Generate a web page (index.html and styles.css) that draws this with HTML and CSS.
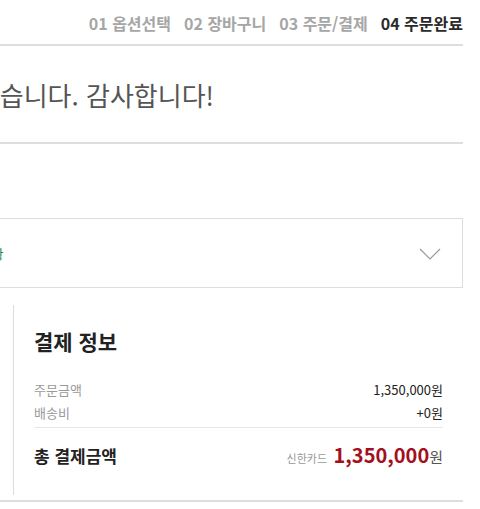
FILE: index.html
```html
<!DOCTYPE html>
<html lang="ko">
  <head>
    <meta charset="UTF-8" />
    <title>주문완료</title>
    <link rel="stylesheet" href="styles.css">
  </head>
  <body>
    <div class="page">
      <div class="wrap">
        <div class="steps">
          <span class="step">01 옵션선택</span>
          <span class="step">02 장바구니</span>
          <span class="step">03 주문/결제</span>
          <span class="step on">04 주문완료</span>
        </div>

        <div class="done">
          <h2>주문이 완료되었습니다. 감사합니다!</h2>
        </div>

        <div class="acc">
          <span class="acc-title">주문상품 및 배송 요청사항</span>
          <svg class="acc-arrow" width="22" height="12" viewBox="0 0 22 12">
            <polyline points="1,1 11,11 21,1" fill="none" stroke="#9a9a9a" stroke-width="1.2" />
          </svg>
        </div>

        <div class="pay-area">
          <div class="pay-left"></div>
          <div class="pay">
            <h3>결제 정보</h3>
            <div class="pay-rows">
              <div class="row">
                <span class="label">주문금액</span>
                <span class="val">1,350,000원</span>
              </div>
              <div class="row">
                <span class="label">배송비</span>
                <span class="val">+0원</span>
              </div>
            </div>
            <div class="total">
              <span class="total-label">총 결제금액</span>
              <span class="total-val">
                <span class="card">신한카드</span>
                <strong>1,350,000</strong><span class="won">원</span>
              </span>
            </div>
          </div>
        </div>
      </div>
    </div>
  </body>
</html>
```

FILE: styles.css
```css
body {
  margin: 0;
  font-family: "Noto Sans CJK KR", "Noto Sans", sans-serif;
  color: #333;
  background: #fff;
  overflow: hidden;
}
.page {
  display: flex;
  justify-content: flex-end;
  padding-right: 17px;
}
.wrap {
  flex-shrink: 0;
  width: 640px;
}
.steps {
  display: flex;
  justify-content: flex-end;
  gap: 13px;
  height: 46px;
  align-items: center;
  padding-top: 2px;
  box-sizing: border-box;
  border-bottom: 2px solid #ddd;
  font-size: 16px;
  font-weight: 700;
  color: #a6a6a6;
}
.step.on {
  color: #2a2a2a;
}
.done {
  height: 96px;
  border-bottom: 2px solid #ddd;
  display: flex;
  align-items: center;
}
.done h2 {
  margin: 0 0 0 2px;
  font-size: 26px;
  font-weight: 400;
  color: #555;
  white-space: nowrap;
}
.acc {
  margin-top: 74px;
  height: 70px;
  box-sizing: border-box;
  border: 1px solid #ddd;
  display: flex;
  align-items: center;
  justify-content: space-between;
  padding: 0 21px 0 0;
}
.acc-title {
  font-size: 13px;
  color: #1a8a3a;
  margin-left: 37px;
}
.acc-arrow {
  display: block;
  margin-top: 2px;
}
.pay-area {
  display: flex;
  padding: 17px 0 5px;
  border-bottom: 2px solid #ddd;
}
.pay-left {
  flex: 1;
}
.pay {
  width: 450px;
  box-sizing: border-box;
  border-left: 1px solid #ddd;
  padding: 21px 20px 26px 20px;
}
.pay h3 {
  margin: 0 0 22px;
  font-size: 21px;
  font-weight: 700;
  color: #222;
}
.pay-rows {
  border-bottom: 1px solid #e6e6e6;
  padding-bottom: 3px;
}
.row {
  display: flex;
  justify-content: space-between;
  font-size: 13px;
  line-height: 23px;
}
.label {
  color: #9a9a9a;
}
.val {
  color: #222;
}
.total {
  display: flex;
  justify-content: space-between;
  align-items: baseline;
  padding-top: 12px;
}
.total-label {
  font-size: 17px;
  font-weight: 700;
  color: #222;
}
.card {
  font-size: 11px;
  color: #999;
  margin-right: 2px;
}
.total-val strong {
  font-size: 20px;
  color: #a3101c;
}
.won {
  font-size: 15px;
  color: #555;
}
```
